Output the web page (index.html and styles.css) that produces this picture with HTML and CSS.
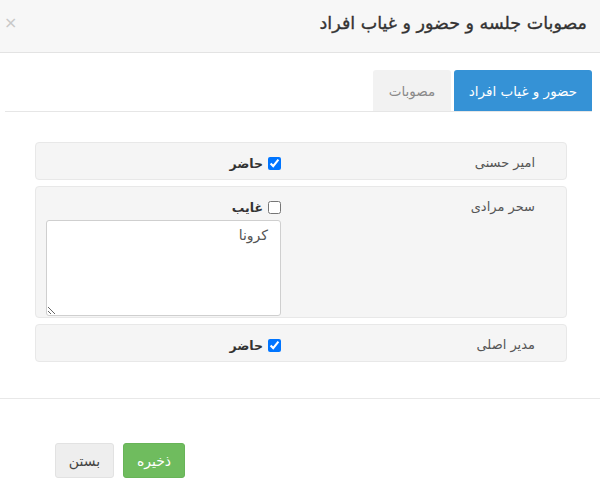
FILE: index.html
```html
<!DOCTYPE html>
<html lang="fa" dir="rtl">
<head>
<meta charset="utf-8">
<title>مصوبات جلسه</title>
<link rel="stylesheet" href="styles.css">
</head>
<body>
<div class="modal">
  <div class="modal-header">
    <h4 class="modal-title">مصوبات جلسه و حضور و غیاب افراد</h4>
    <span class="close">×</span>
  </div>
  <div class="modal-body">
    <ul class="tabs">
      <li class="tab active">حضور و غیاب افراد</li>
      <li class="tab">مصوبات</li>
    </ul>
    <div class="rows">
      <div class="well">
        <div class="name">امیر حسنی</div>
        <div class="field">
          <label class="check"><input type="checkbox" checked><span>حاضر</span></label>
        </div>
      </div>
      <div class="well">
        <div class="name">سحر مرادی</div>
        <div class="field">
          <label class="check"><input type="checkbox"><span>غایب</span></label>
          <textarea class="note">کرونا</textarea>
        </div>
      </div>
      <div class="well">
        <div class="name">مدیر اصلی</div>
        <div class="field">
          <label class="check"><input type="checkbox" checked><span>حاضر</span></label>
        </div>
      </div>
    </div>
  </div>
  <div class="modal-footer">
    <button class="btn btn-success">ذخیره</button>
    <button class="btn btn-default">بستن</button>
  </div>
</div>
</body>
</html>
```

FILE: styles.css
```css
html, body {
  margin: 0;
  padding: 0;
  background: #fff;
}
body {
  width: 600px;
  height: 499px;
  overflow: hidden;
  font-family: "DejaVu Sans", "Noto Sans", sans-serif;
  color: #333;
  font-size: 12px;
}
.modal-header {
  height: 53px;
  background: #f7f7f7;
  border-bottom: 1px solid #e3e3e3;
  box-sizing: border-box;
  display: flex;
  align-items: center;
  justify-content: space-between;
  padding: 0 13px 6px 4px;
}
.modal-title {
  margin: 0;
  font-size: 17.5px;
  font-weight: normal;
  color: #333;
  -webkit-text-stroke: 0.35px #333;
}
.close {
  color: #c8c8c8;
  font-size: 16px;
  line-height: 1;
}
.modal-body {
  padding: 17px 8px 0 5px;
}
.tabs {
  list-style: none;
  margin: 0;
  padding: 0;
  display: flex;
  gap: 3px;
  border-bottom: 1px solid #e6e6e6;
}
.tab {
  height: 41px;
  display: flex;
  align-items: center;
  justify-content: center;
  padding: 0 12px;
  background: #f2f2f2;
  color: #8a8a8a;
  font-size: 13.5px;
  border-radius: 3px 3px 0 0;
  width: 54px;
}
.tab.active {
  background: #3592d6;
  color: #fff;
  width: 114px;
}
.rows {
  display: flex;
  flex-direction: column;
  gap: 6px;
  margin: 30px 25px 0 30px;
}
.well {
  background: #f5f5f5;
  border: 1px solid #e8e8e8;
  border-radius: 4px;
  display: flex;
  justify-content: space-between;
  align-items: flex-start;
  padding: 10px 31px 6px 10px;
}
.name {
  line-height: 20px;
  color: #555;
  font-size: 13px;
}
.field {
  width: 237px;
  display: flex;
  flex-direction: column;
}
.check {
  display: flex;
  align-items: center;
  gap: 5px;
  height: 20px;
  font-weight: bold;
  font-size: 12.5px;
  color: #333;
}
.check input {
  margin: 0 2px 0 0;
  width: 13px;
  height: 13px;
}
.note {
  align-self: flex-end;
  width: 235px;
  height: 96px;
  box-sizing: border-box;
  border: 1px solid #cfcfcf;
  border-radius: 3px;
  padding: 6px 12px;
  margin: 3px 0 -5px 0;
  font-family: "DejaVu Sans", sans-serif;
  font-size: 14px;
  color: #555;
  background: #fff;
  direction: rtl;
}
.modal-footer {
  margin-top: 36px;
  border-top: 1px solid #e8e8e8;
  display: flex;
  flex-direction: row-reverse;
  justify-content: flex-end;
  gap: 9px;
  direction: ltr;
  padding: 44px 0 0 55px;
}
.btn {
  height: 35px;
  border-radius: 3px;
  font-family: "DejaVu Sans", sans-serif;
  font-size: 14px;
  padding: 0 8px;
  border: 1px solid transparent;
}
.btn-success {
  background: #6fbc5e;
  border-color: #68b458;
  color: #fff;
  width: 62px;
}
.btn-default {
  background: #eeeeee;
  border-color: #e2e2e2;
  color: #444;
  width: 59px;
}
```
